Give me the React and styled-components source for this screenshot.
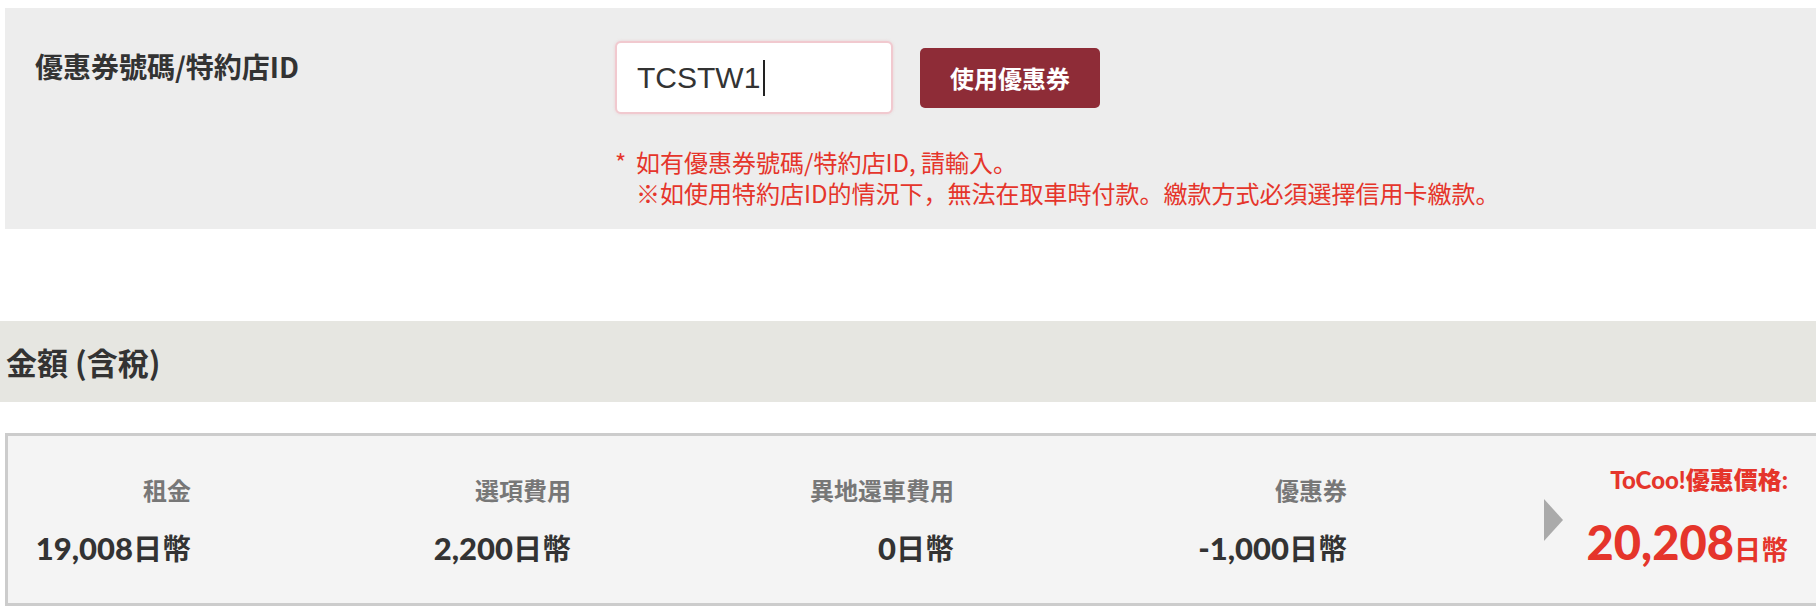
import React from "react"
import styled, { createGlobalStyle } from "styled-components"

const GlobalStyle = createGlobalStyle`
  body {
    margin: 0;
    background: #fff;
    font-family: "Noto Sans CJK JP", "Noto Sans CJK TC", sans-serif;
    color: #333;
  }
`

const Page = styled.div`
  padding-top: 8px;
  width: 1816px;
  overflow: hidden;
`

const CouponPanel = styled.section`
  margin-left: 5px;
  height: 221px;
  box-sizing: border-box;
  background: #ededed;
  padding: 33px 0 0 30px;
  display: flex;
`

const FieldLabel = styled.div`
  width: 580px;
  margin-top: 7px;
  font-size: 28px;
  line-height: 36px;
  font-weight: 700;
  color: #333;
`

const FormCol = styled.div`
  display: flex;
  flex-direction: column;
`

const InputRow = styled.div`
  display: flex;
  align-items: center;
  gap: 27px;
`

const CodeField = styled.div`
  width: 278px;
  height: 73px;
  box-sizing: border-box;
  background: #fff;
  border: 2px solid #f1c9cf;
  border-radius: 6px;
  box-shadow: 0 0 3px rgba(230, 150, 160, 0.35);
  padding-left: 20px;
  display: flex;
  align-items: center;
  font-family: "Liberation Sans", Arial, sans-serif;
  font-size: 30px;
  color: #333;
`

const Caret = styled.span`
  display: inline-block;
  width: 2px;
  height: 36px;
  margin-left: 3px;
  background: #222;
`

const ApplyButton = styled.button`
  width: 180px;
  height: 60px;
  border: none;
  border-radius: 5px;
  background: #8e2c37;
  color: #fff;
  font-family: inherit;
  font-size: 24px;
  font-weight: 700;
  cursor: pointer;
`

const Note = styled.div`
  margin-top: 32px;
  display: flex;
  color: #e5352b;
  font-size: 24px;
  line-height: 31px;
`

const NoteMark = styled.span`
  width: 21px;
  flex: none;
`

const SectionBand = styled.h2`
  margin: 92px 0 0;
  height: 81px;
  background: #e6e6e1;
  padding-left: 6px;
  font-size: 31px;
  line-height: 81px;
  font-weight: 700;
  color: #333;
`

const PriceBox = styled.div`
  margin: 31px 0 0 5px;
  height: 173px;
  box-sizing: border-box;
  background: #f4f4f4;
  border: 3px solid #cccccc;
  border-right: none;
  display: flex;
`

const PriceCol = styled.div`
  width: ${(p) => p.w}px;
  flex: none;
  padding-top: 39px;
  display: flex;
  flex-direction: column;
  align-items: flex-end;
`

const PriceLabel = styled.div`
  font-size: 24px;
  line-height: 30px;
  font-weight: 700;
  color: #777;
`

const PriceValue = styled.div`
  margin-top: 22px;
  font-family: "Lato", "Noto Sans CJK JP", sans-serif;
  font-size: 31px;
  line-height: 40px;
  font-weight: 900;
  color: #333;
  white-space: nowrap;
`

const Yen = styled.span`
  font-family: "Noto Sans CJK JP", "Noto Sans CJK TC", sans-serif;
  font-size: ${(p) => p.size || 29}px;
  font-weight: 700;
`

const TotalGroup = styled.div`
  margin-left: auto;
  padding-right: 28px;
  align-self: center;
  display: flex;
  align-items: center;
  gap: 23px;
`

const Arrow = styled.div`
  width: 0;
  height: 0;
  border-top: 21px solid transparent;
  border-bottom: 21px solid transparent;
  border-left: 19px solid #aaaaaa;
`

const Total = styled.div`
  width: 202px;
  display: flex;
  flex-direction: column;
  align-items: flex-end;
  color: #e5352b;
`

const TotalLabel = styled.div`
  font-family: "Lato", "Noto Sans CJK JP", sans-serif;
  font-size: 24px;
  line-height: 30px;
  font-weight: 900;
  white-space: nowrap;
`

const TotalValue = styled.div`
  margin-top: 22px;
  font-family: "Lato", "Noto Sans CJK JP", sans-serif;
  font-size: 47px;
  line-height: 50px;
  font-weight: 900;
  white-space: nowrap;
`

const prices = [
  { label: "租金", value: "19,008", w: 183 },
  { label: "選項費用", value: "2,200", w: 380 },
  { label: "異地還車費用", value: "0", w: 383 },
  { label: "優惠券", value: "-1,000", w: 393 },
]

export default function App() {
  return (
    <Page>
      <GlobalStyle />
      <CouponPanel>
        <FieldLabel>優惠券號碼/特約店ID</FieldLabel>
        <FormCol>
          <InputRow>
            <CodeField role="textbox">
              TCSTW1
              <Caret />
            </CodeField>
            <ApplyButton>使用優惠券</ApplyButton>
          </InputRow>
          <Note>
            <NoteMark>*</NoteMark>
            <div>
              如有優惠券號碼/特約店ID, 請輸入。
              <br />
              ※如使用特約店ID的情況下，無法在取車時付款。繳款方式必須選擇信用卡繳款。
            </div>
          </Note>
        </FormCol>
      </CouponPanel>

      <SectionBand>金額 (含稅)</SectionBand>

      <PriceBox>
        {prices.map((p) => (
          <PriceCol key={p.label} w={p.w}>
            <PriceLabel>{p.label}</PriceLabel>
            <PriceValue>
              {p.value}
              <Yen>日幣</Yen>
            </PriceValue>
          </PriceCol>
        ))}
        <TotalGroup>
          <Arrow />
          <Total>
            <TotalLabel>ToCoo!優惠價格:</TotalLabel>
            <TotalValue>
              20,208<Yen size={27}>日幣</Yen>
            </TotalValue>
          </Total>
        </TotalGroup>
      </PriceBox>
    </Page>
  )
}
